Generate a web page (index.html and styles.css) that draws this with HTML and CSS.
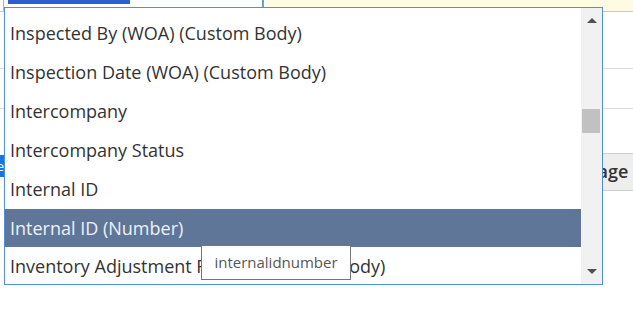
FILE: index.html
```html
<!DOCTYPE html>
<html>
<head>
<meta charset="utf-8">
<link rel="stylesheet" href="styles.css">
</head>
<body>
<div class="page">
  <div class="topbar">
    <div class="field"><span class="sel">Internal ID (Num)</span></div>
    <div class="note"></div>
  </div>
  <div class="rows">
    <div class="line l1"></div>
    <div class="line l2"></div>
    <div class="btnrow">
      <div class="leftbtn">Mine</div>
      <div class="rightbtn">Manage</div>
    </div>
  </div>
</div>

<div class="dropdown">
  <ul class="list">
    <li>Inspected By (WOA) (Custom Body)</li>
    <li>Inspection Date (WOA) (Custom Body)</li>
    <li>Intercompany</li>
    <li>Intercompany Status</li>
    <li>Internal ID</li>
    <li class="active">Internal ID (Number)</li>
    <li>Inventory Adjustment Reason (Custom Body)</li>
  </ul>
  <div class="scrollbar">
    <div class="arrow up"></div>
    <div class="track"><div class="thumb"></div></div>
    <div class="arrow down"></div>
  </div>
</div>

<div class="tooltip">internalidnumber</div>
</body>
</html>
```

FILE: styles.css
```css
html, body {
  margin: 0;
  padding: 0;
  width: 633px;
  height: 316px;
  overflow: hidden;
  background: #ffffff;
  font-family: "Open Sans", "Liberation Sans", sans-serif;
}

.page {
  position: relative;
  width: 633px;
  height: 316px;
}

.topbar {
  display: flex;
  height: 11px;
  border-bottom: 1px solid #c9c9c9;
}

.field {
  width: 258px;
  margin-left: 3px;
  height: 11px;
  border-left: 1px solid #b5b5b5;
  border-right: 2px solid #6f9bd6;
  background: #ffffff;
  position: relative;
  overflow: hidden;
}

.sel {
  display: block;
  margin-left: 4px;
  width: 122px;
  height: 4px;
  background: #2d5fcf;
  font-size: 1px;
  color: transparent;
}

.note {
  flex: 1;
  background: #fffbe3;
}

.rows {
  display: flex;
  flex-direction: column;
}

.line {
  height: 1px;
  background: #dddddd;
}
.l1 { margin-top: 56px; }
.l2 { margin-top: 39px; }

.btnrow {
  display: flex;
  justify-content: space-between;
  margin-top: 44px;
}

.leftbtn {
  width: 4px;
  height: 22px;
  margin-top: 2px;
  background: #1a73e8;
  color: #ffffff;
  font-size: 13px;
  line-height: 22px;
  overflow: hidden;
  direction: rtl;
}

.rightbtn {
  width: 70px;
  height: 36px;
  background: #eeeeee;
  border: 1px solid #cccccc;
  border-right: none;
  font-size: 18px;
  font-weight: 600;
  color: #333333;
  line-height: 34px;
  text-indent: -4px;
  overflow: hidden;
  white-space: nowrap;
}

.dropdown {
  position: absolute;
  left: 4px;
  top: 7px;
  width: 597px;
  height: 276px;
  border: 1px solid #4f8fdc;
  background: #ffffff;
  display: flex;
  overflow: hidden;
}

.list {
  list-style: none;
  margin: 0;
  padding: 6px 0 0 0;
  flex: 1;
}

.list li {
  height: 39px;
  line-height: 39px;
  padding-left: 5px;
  font-size: 18px;
  color: #333333;
  white-space: nowrap;
}

.list li.active {
  background: #5f7699;
  color: #eef1f5;
  height: 38px;
  line-height: 38px;
}

.scrollbar {
  width: 21px;
  background: #f1f1f1;
  display: flex;
  flex-direction: column;
}

.arrow {
  height: 17px;
  display: flex;
  align-items: center;
  justify-content: center;
}
.arrow.up { margin-top: 4px; }
.arrow.up::before {
  content: "";
  border-left: 5px solid transparent;
  border-right: 5px solid transparent;
  border-bottom: 5px solid #505050;
}
.arrow.down { margin-bottom: 4px; }
.arrow.down::before {
  content: "";
  border-left: 5px solid transparent;
  border-right: 5px solid transparent;
  border-top: 5px solid #505050;
}

.track {
  flex: 1;
  padding: 80px 2px 0 1px;
}

.thumb {
  height: 24px;
  background: #c1c1c1;
}

.tooltip {
  position: absolute;
  left: 201px;
  top: 245px;
  width: 148px;
  height: 33px;
  border: 1px solid #767676;
  background: #ffffff;
  color: #575757;
  font-size: 15px;
  line-height: 33px;
  text-align: center;
  box-sizing: content-box;
}
```
